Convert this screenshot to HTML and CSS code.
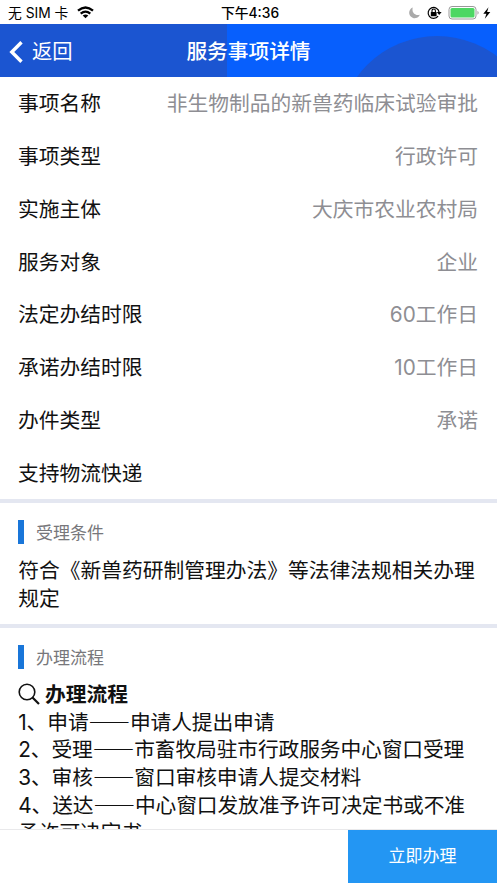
FILE: index.html
```
<!DOCTYPE html>
<html lang="zh-CN">
<head>
<meta charset="utf-8">
<title>服务事项详情</title>
<link rel="stylesheet" href="styles.css">
</head>
<body>
<div class="screen">
  <div class="status">
    <div class="carrier"><span>无 SIM 卡</span>
      <svg width="17" height="13" viewBox="0 0 17 13"><g fill="none" stroke="#000" stroke-width="2.3"><path d="M1 4.7Q8.500-1.700 16 4.700"/><path d="M3.700 7.600Q8.500 3.600 13.300 7.600"/></g><path d="M5.700 9.500Q8.500 7.300 11.300 9.500L8.500 12.300z"/></svg>
    </div>
    <div class="clock">下午4:36</div>
    <div class="indicators">
      <svg width="89" height="16" viewBox="0 0 89 16">
        <path d="M9.800 2.500A5.500 5.500 0 1 0 16.800 9.700C12 11.300 8.300 7 9.800 2.500z" fill="#aaa"/>
        <g transform="translate(2.800 -.3)">
          <path d="M32.300 11.500A5.500 5.500 0 1 1 33.300 7.500" fill="none" stroke="#000" stroke-width="1.200"/>
          <path d="M31 7.300h4.800l-2.400 3z"/>
          <rect x="25" y="7.200" width="5.800" height="4.300" rx=".5"/>
          <path d="M26.200 7.500V6a1.700 1.700 0 0 1 3.400 0v1.500" fill="none" stroke="#000" stroke-width="1.100"/>
        </g>
        <rect x="46" y="1.500" width="27" height="12.500" rx="3" fill="#fff" stroke="#999"/>
        <rect x="47.500" y="3" width="24" height="9.500" rx="1.500" fill="#4cd763"/>
        <path d="M74.500 5.800q2.300 2 0 4z" fill="#999"/>
        <path d="M85.500 2.300L80.300 8.700h3.100l-1.600 5 5.500-6.700h-3.200z"/>
      </svg>
    </div>
  </div>
  <div class="nav">
    <svg class="nav-art" width="497" height="53" viewBox="0 0 497 53"><path fill="#075ffd" d="M227 0h270v53H227z"/><circle cx="437" cy="110.500" r="98.500" fill="#1b55d1"/></svg>
    <div class="back"><svg width="15" height="24" viewBox="0 0 15 24"><path d="M12.500 2.300L2.800 12l9.700 9.700" fill="none" stroke="#fff" stroke-width="3.400"/></svg><span>返回</span></div>
    <div class="title">服务事项详情</div>
  </div>
  <div class="content">
    <div class="rows">
      <div class="row"><span>事项名称</span><span class="value">非生物制品的新兽药临床试验审批</span></div>
      <div class="row"><span>事项类型</span><span class="value">行政许可</span></div>
      <div class="row"><span>实施主体</span><span class="value">大庆市农业农村局</span></div>
      <div class="row"><span>服务对象</span><span class="value">企业</span></div>
      <div class="row"><span>法定办结时限</span><span class="value">60工作日</span></div>
      <div class="row"><span>承诺办结时限</span><span class="value">10工作日</span></div>
      <div class="row"><span>办件类型</span><span class="value">承诺</span></div>
      <div class="row"><span>支持物流快递</span></div>
    </div>
    <div class="section">
      <div class="heading">受理条件</div>
      <div class="body-text">符合《新兽药研制管理办法》等法律法规相关办理<br>规定</div>
    </div>
    <div class="section">
      <div class="heading">办理流程</div>
      <div class="body-text">
        <div class="flow-title"><svg width="23" height="23" viewBox="0 0 23 23"><g fill="none" stroke="#111"><circle cx="9" cy="9" r="7.800" stroke-width="1.600"/><path d="M14.500 14.500l6.500 6.500" stroke-width="2.200"/></g></svg><b>办理流程</b></div>
        <div class="line">1、申请<span class="dash">——</span>申请人提出申请</div>
        <div class="line">2、受理<span class="dash">——</span>市畜牧局驻市行政服务中心窗口受理</div>
        <div class="line">3、审核<span class="dash">——</span>窗口审核申请人提交材料</div>
        <div class="line">4、送达<span class="dash">——</span>中心窗口发放准予许可决定书或不准</div>
        <div class="line">予许可决定书</div>
      </div>
    </div>
  </div>
  <div class="footer"><div class="apply">立即办理</div></div>
</div>
</body>
</html>
```
FILE: styles.css
```
* { box-sizing: border-box; }
body { margin: 0; background: #fff; color: #111; font-family: Inter, "Noto Sans CJK SC", sans-serif; }
svg { display: block; flex: none; }
.screen { width: 497px; height: 883px; display: flex; flex-direction: column; overflow: hidden; }
.status { flex: none; height: 24px; display: grid; grid-template-columns: 1fr auto 1fr; align-items: center; padding: 1px 5px 0 8px; font-size: 13.8px; line-height: 22px; color: #000; }
.carrier { display: flex; align-items: center; gap: 9px; }
.clock { font-weight: 500; }
.indicators { display: flex; justify-content: flex-end; }
.nav { flex: none; position: relative; height: 53px; background: #1b55d1; color: #fff; display: grid; grid-template-columns: 1fr auto 1fr; align-items: center; padding: 2px 9px 0; font-size: 20.7px; line-height: 30px; }
.nav-art { position: absolute; left: 0; top: 0; }
.back { position: relative; display: flex; align-items: center; gap: 8px; font-size: 20.3px; }
.title { position: relative; font-weight: 500; }
.content { flex: 1; min-height: 0; overflow: hidden; }
.row { height: 52.75px; display: flex; justify-content: space-between; align-items: center; padding: 2px 19px 0 18px; font-size: 20.75px; line-height: 30px; }
.value { color: #8e8e93; }
.section { border-top: 4px solid #e4e7f1; padding: 17px 0 11.5px 18px; }
.heading { height: 24px; border-left: 6px solid #1976d9; padding-left: 12px; font-size: 17px; line-height: 27px; color: #77777b; }
.body-text { margin-top: 13px; padding-left: .3px; font-size: 20.75px; line-height: 27.7px; white-space: nowrap; }
.line { height: 27.7px; letter-spacing: -.12px; }
.dash { font-family: "Noto Sans CJK SC", sans-serif; font-weight: 500; line-height: 0; }
.flow-title { display: flex; align-items: center; gap: 4px; height: 27.7px; margin: -1px 0 0 -.3px; }
.flow-title b { font-weight: 600; }
.footer { flex: none; height: 53px; display: flex; justify-content: flex-end; box-shadow: 0 -1px 0 #e9e9eb; background: #fff; position: relative; }
.apply { width: 149px; background: #2396f3; color: #fff; font-size: 17px; line-height: 53px; text-align: center; }
```
